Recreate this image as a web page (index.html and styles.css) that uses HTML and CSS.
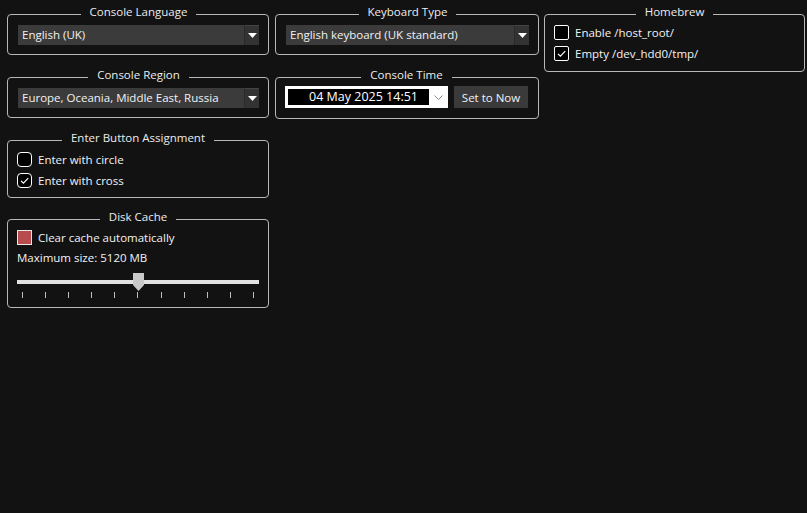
FILE: index.html
```html
<!DOCTYPE html>
<html lang="en">
<head>
  <meta charset="utf-8" />
  <title>System settings</title>
  <link rel="stylesheet" href="styles.css">
</head>

<body>
  <div class="page">

    <!-- left column -->
    <div class="col col-left">
      <fieldset class="group">
        <legend>Console Language</legend>
        <div class="combo">
          <span class="combo-text">English (UK)</span>
          <span class="combo-btn"><svg width="9" height="5" viewBox="0 0 9 5"><path d="M0 0h9L4.5 5z" fill="#fff"/></svg></span>
        </div>
      </fieldset>

      <fieldset class="group">
        <legend>Console Region</legend>
        <div class="combo">
          <span class="combo-text">Europe, Oceania, Middle East, Russia</span>
          <span class="combo-btn"><svg width="9" height="5" viewBox="0 0 9 5"><path d="M0 0h9L4.5 5z" fill="#fff"/></svg></span>
        </div>
      </fieldset>

      <fieldset class="group group-checks">
        <legend>Enter Button Assignment</legend>
        <label class="check">
          <span class="box round"></span>Enter with circle
        </label>
        <label class="check">
          <span class="box round"><svg width="13" height="13" viewBox="0 0 13 13"><path d="M3 6.8l2.4 2.4 4.8-5" fill="none" stroke="#fff" stroke-width="1.2"/></svg></span>Enter with cross
        </label>
      </fieldset>

      <fieldset class="group group-cache">
        <legend>Disk Cache</legend>
        <label class="check">
          <span class="box red"></span>Clear cache automatically
        </label>
        <div class="size-label">Maximum size: 5120 MB</div>
        <div class="slider">
          <div class="groove"></div>
          <svg class="handle" width="11" height="18" viewBox="0 0 11 18"><path d="M0 0h11v12l-5.5 6L0 12z" fill="#c9c9c9"/></svg>
          <div class="ticks">
            <i></i><i></i><i></i><i></i><i></i><i></i><i></i><i></i><i></i><i></i><i></i>
          </div>
        </div>
      </fieldset>
    </div>

    <!-- middle column -->
    <div class="col col-mid">
      <fieldset class="group">
        <legend>Keyboard Type</legend>
        <div class="combo">
          <span class="combo-text">English keyboard (UK standard)</span>
          <span class="combo-btn"><svg width="9" height="5" viewBox="0 0 9 5"><path d="M0 0h9L4.5 5z" fill="#fff"/></svg></span>
        </div>
      </fieldset>

      <fieldset class="group group-time">
        <legend>Console Time</legend>
        <div class="time-row">
          <div class="date-edit">
            <span class="date-text">04 May 2025 14:51</span>
            <span class="date-btn"><svg width="9" height="5" viewBox="0 0 9 5"><path d="M0.5 0.5l4 4 4-4" fill="none" stroke="#8a8a8a" stroke-width="1"/></svg></span>
          </div>
          <button class="btn">Set to Now</button>
        </div>
      </fieldset>
    </div>

    <!-- right column -->
    <div class="col col-right">
      <fieldset class="group group-home">
        <legend>Homebrew</legend>
        <label class="check">
          <span class="box"></span>Enable /host_root/
        </label>
        <label class="check">
          <span class="box"><svg width="13" height="13" viewBox="0 0 13 13"><path d="M3 6.8l2.4 2.4 4.8-5" fill="none" stroke="#fff" stroke-width="1.2"/></svg></span>Empty /dev_hdd0/tmp/
        </label>
      </fieldset>
    </div>

  </div>
</body>
</html>
```

FILE: styles.css
```css
* {
  box-sizing: border-box;
}

body {
  margin: 0;
  background-color: #121212;
  color: #f2f2f2;
  font-family: "Open Sans", "Noto Sans", sans-serif;
  font-size: 11.5px;
  height: 100vh;
  overflow: hidden;
}

.page {
  display: flex;
  align-items: flex-start;
  gap: 6px;
  padding: 6px 0 0 7px;
}

.col {
  display: flex;
  flex-direction: column;
  gap: 14px;
}
.col-left { width: 262px; }
.col-mid { width: 264px; }
.col-right { width: 261px; margin-left: -1px; }

/* group boxes */
.group {
  margin: 0;
  min-width: 0;
  border: 1px solid #b8b8b8;
  border-radius: 4px;
  padding: 3px 9px 9px 10px;
}
.group legend {
  margin: 0 auto;
  padding: 0 9px 4px;
  line-height: 12px;
  color: #ececec;
}
.group-checks {
  padding: 1px 9px 6px 9px;
}
.group-home {
  padding: 0 9px 7px 9px;
}
.group-time {
  padding: 1px 10px 10px 9px;
}
.group-cache {
  margin-top: -1px;
  padding: 0 9px 8px 9px;
}

/* combo box */
.combo {
  display: flex;
  height: 20px;
  background-color: #3b3b3b;
}
.combo-text {
  flex: 1;
  padding-left: 4px;
  line-height: 20px;
  white-space: nowrap;
}
.combo-btn {
  width: 15px;
  display: flex;
  align-items: center;
  justify-content: center;
  background-color: #333;
  border-left: 1px solid #2a2a2a;
  border-top: 1px solid #444;
}

/* checkboxes */
.check {
  display: flex;
  align-items: center;
  height: 21px;
  white-space: nowrap;
}
.group-cache .check {
  height: 20px;
}
.box {
  width: 15px;
  height: 15px;
  margin-right: 6px;
  border: 1px solid #fff;
  border-radius: 2px;
  background-color: #000;
  display: flex;
  align-items: center;
  justify-content: center;
}
.box.round {
  border-radius: 4px;
}
.box.red {
  border-radius: 0;
  background-color: #b74b4d;
  border-color: #e8e8e8;
}

/* disk cache */
.size-label {
  height: 22px;
  line-height: 22px;
}
.slider {
  position: relative;
  height: 30px;
}
.groove {
  position: absolute;
  left: 0;
  right: 0;
  top: 11px;
  height: 4px;
  background-color: #e2e2e2;
}
.handle {
  position: absolute;
  left: 116px;
  top: 4px;
}
.ticks {
  position: absolute;
  left: 5px;
  right: 5px;
  top: 23px;
  display: flex;
  justify-content: space-between;
}
.ticks i {
  width: 1px;
  height: 6px;
  background-color: #bdbdbd;
}

/* console time */
.time-row {
  display: flex;
  gap: 6px;
  height: 22px;
}
.date-edit {
  flex: 1;
  display: flex;
  background-color: #fff;
  padding: 3px 0 3px 3px;
}
.date-text {
  flex: 1;
  background-color: #000;
  color: #fff;
  font-size: 12.5px;
  text-align: center;
  line-height: 16px;
  padding-left: 10px;
}
.date-btn {
  width: 19px;
  display: flex;
  align-items: center;
  justify-content: center;
}
.btn {
  width: 74px;
  border: 0;
  background-color: #3a3a3a;
  color: #f2f2f2;
  font-family: inherit;
  font-size: inherit;
  padding: 0;
}
```
